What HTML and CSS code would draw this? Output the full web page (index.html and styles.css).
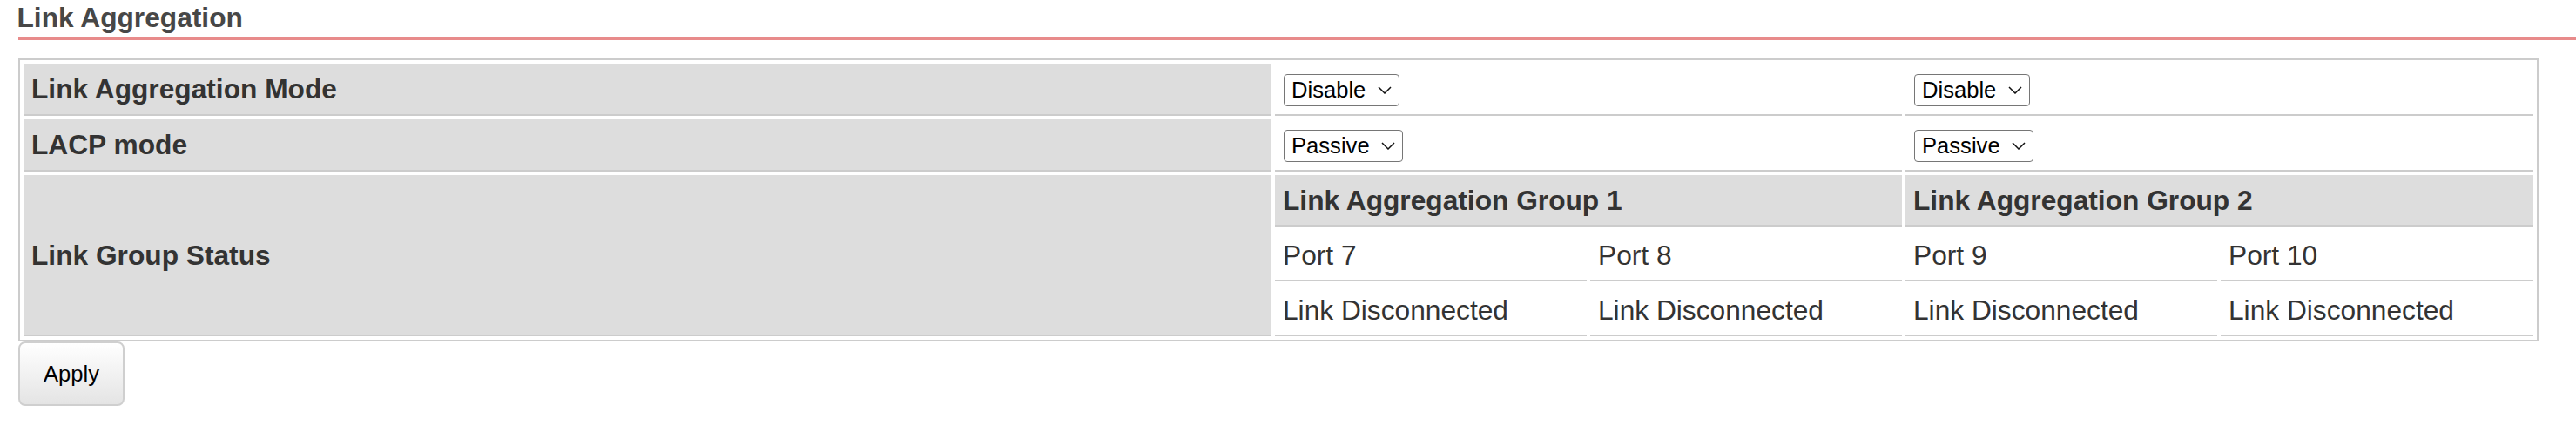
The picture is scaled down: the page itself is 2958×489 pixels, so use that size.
FILE: index.html
```html
<!DOCTYPE html>
<html>
<head>
<meta charset="utf-8">
<title>Link Aggregation</title>
<link rel="stylesheet" href="styles.css">
</head>
<body>
<div class="page">
  <h2 class="title">Link Aggregation</h2>
  <form class="form">
    <table class="grid">
      <colgroup>
        <col class="c-label">
        <col class="c-port">
        <col class="c-port">
        <col class="c-port">
        <col class="c-port-last">
      </colgroup>
      <tr class="row-sel">
        <td class="label">Link Aggregation Mode</td>
        <td class="value" colspan="2">
          <span class="selwrap">
            <select class="sel sel-dis"><option>Disable</option><option>Enable</option></select>
            <svg class="chev" width="16" height="9" viewBox="0 0 16 9"><path d="M1 1 L8 8 L15 1" fill="none" stroke="#111" stroke-width="1.5"/></svg>
          </span>
        </td>
        <td class="value" colspan="2">
          <span class="selwrap">
            <select class="sel sel-dis"><option>Disable</option><option>Enable</option></select>
            <svg class="chev" width="16" height="9" viewBox="0 0 16 9"><path d="M1 1 L8 8 L15 1" fill="none" stroke="#111" stroke-width="1.5"/></svg>
          </span>
        </td>
      </tr>
      <tr class="row-sel">
        <td class="label">LACP mode</td>
        <td class="value" colspan="2">
          <span class="selwrap">
            <select class="sel sel-pas"><option>Passive</option><option>Active</option></select>
            <svg class="chev" width="16" height="9" viewBox="0 0 16 9"><path d="M1 1 L8 8 L15 1" fill="none" stroke="#111" stroke-width="1.5"/></svg>
          </span>
        </td>
        <td class="value" colspan="2">
          <span class="selwrap">
            <select class="sel sel-pas"><option>Passive</option><option>Active</option></select>
            <svg class="chev" width="16" height="9" viewBox="0 0 16 9"><path d="M1 1 L8 8 L15 1" fill="none" stroke="#111" stroke-width="1.5"/></svg>
          </span>
        </td>
      </tr>
      <tr class="row-txt">
        <td class="label" rowspan="3">Link Group Status</td>
        <td class="group" colspan="2">Link Aggregation Group 1</td>
        <td class="group" colspan="2">Link Aggregation Group 2</td>
      </tr>
      <tr class="row-txt">
        <td class="value">Port 7</td>
        <td class="value">Port 8</td>
        <td class="value">Port 9</td>
        <td class="value">Port 10</td>
      </tr>
      <tr class="row-txt">
        <td class="value">Link Disconnected</td>
        <td class="value">Link Disconnected</td>
        <td class="value">Link Disconnected</td>
        <td class="value">Link Disconnected</td>
      </tr>
    </table>
    <button type="button" class="btn">Apply</button>
  </form>
</div>
</body>
</html>
```
FILE: styles.css
```css
html, body {
  margin: 0;
  padding: 0;
  background: #ffffff;
}

body {
  font-family: "Liberation Sans", Arial, sans-serif;
  color: #333333;
}

.page {
  padding: 0 0 0 21px;
}

.title {
  margin: 0;
  padding: 2px 0 4px 0;
  font-size: 31.7px;
  line-height: 36px;
  font-weight: bold;
  color: #474747;
  text-indent: -1.5px;
  border-bottom: 4px solid #e88b8b;
}

.form {
  margin: 21px 0 0 0;
}

.grid {
  width: 2894px;
  table-layout: fixed;
  border: 2px solid #cccccc;
  border-collapse: separate;
  border-spacing: 4px;
  font-size: 31.7px;
}

.c-label { width: 1433px; }
.c-port { width: 358px; }
.c-port-last { width: 359px; }

.grid td {
  box-sizing: border-box;
  padding: 0 9px;
  vertical-align: middle;
  border-bottom: 2px solid #cccccc;
  white-space: nowrap;
  line-height: 36px;
}

.row-sel td { height: 60px; }
.row-txt td { height: 59px; }

.label {
  background: #dddddd;
  font-weight: bold;
  color: #333333;
}

.group {
  background: #dddddd;
  font-weight: bold;
  color: #333333;
}

.value {
  background: #ffffff;
  color: #333333;
}

.selwrap {
  position: relative;
  display: inline-block;
  vertical-align: middle;
  margin-left: 1px;
  line-height: 0;
}

.sel {
  -webkit-appearance: none;
  appearance: none;
  box-sizing: border-box;
  margin: 0;
  padding: 0 0 0 8px;
  font-family: "Liberation Sans", Arial, sans-serif;
  font-size: 25.6px;
  line-height: 35px;
  color: #000000;
  height: 37px;
  border: 1px solid #767676;
  border-radius: 4px;
  background-color: #ffffff;
  vertical-align: middle;
}

.sel-dis { width: 133px; }
.sel-pas { width: 137px; }

.chev {
  position: absolute;
  right: 9px;
  top: 14px;
  pointer-events: none;
}

.btn {
  display: block;
  box-sizing: border-box;
  width: 122px;
  height: 74px;
  margin: 0;
  padding: 0;
  font-family: "Liberation Sans", Arial, sans-serif;
  font-size: 25.6px;
  color: #000000;
  background: linear-gradient(#ffffff, #e4e4e4);
  border: 2px solid #cfcfcf;
  border-radius: 8px;
}
```
